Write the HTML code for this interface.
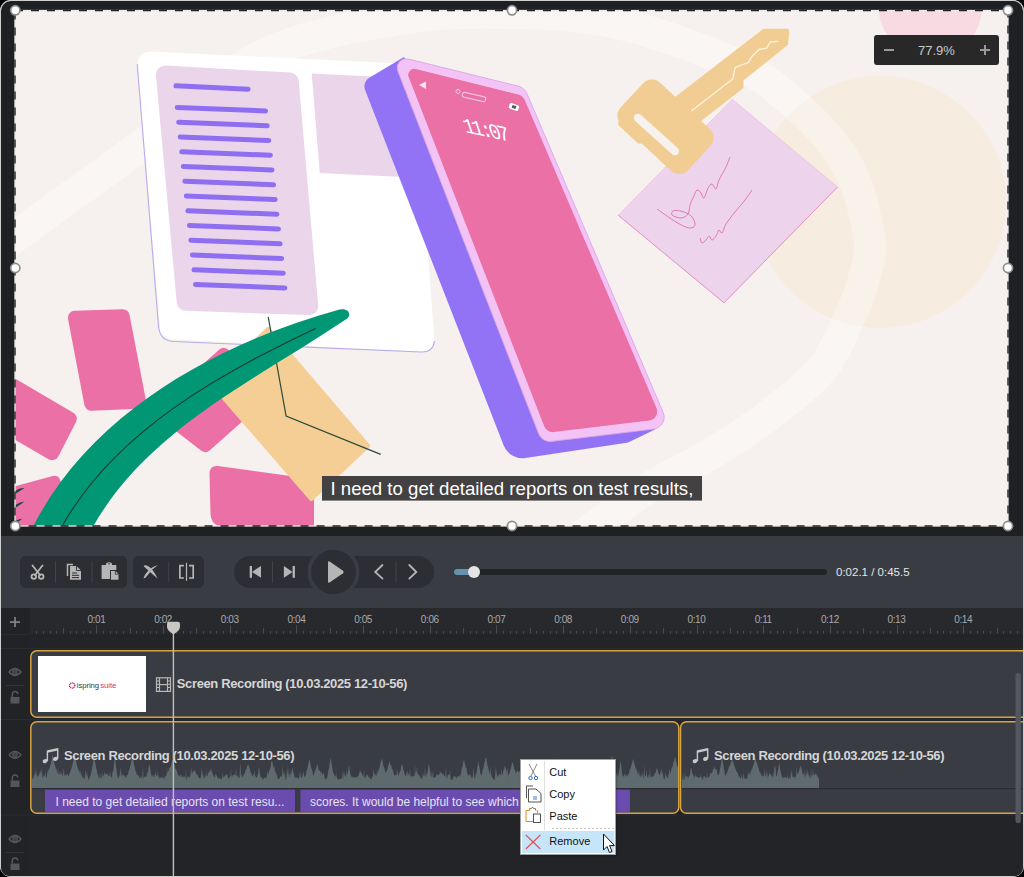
<!DOCTYPE html>
<html><head><meta charset="utf-8">
<style>
*{box-sizing:border-box;margin:0;padding:0}
html,body{width:1024px;height:877px;overflow:hidden;background:#000;font-family:"Liberation Sans",sans-serif}
.abs{position:absolute}
#win{position:absolute;left:0;top:0;width:1024px;height:877px;border-radius:11px;background:#1f2024;overflow:hidden;box-shadow:inset 0 0 0 1px #cfcfcf}
#canvas{position:absolute;left:15px;top:10px;width:993px;height:516px;background:#f6f1ee;overflow:hidden}
#ctrl{position:absolute;left:1px;top:536px;width:1022px;height:72px;background:#393c43}
.grp{position:absolute;top:20px;height:32px;background:#2c2e33;border-radius:5px}
.sep{position:absolute;top:8px;width:1px;height:16px;background:#43464c}
#ruler{position:absolute;left:30px;top:608px;width:993px;height:26px;background:#28292d}
#leftcol{position:absolute;left:1px;top:608px;width:29px;height:268px;background:#212327}
#tracks{position:absolute;left:30px;top:634px;width:993px;height:242px;background:#222428}
.clip{position:absolute;border:2px solid #d9a443;border-radius:6px;background:#393c43}
.title{position:absolute;color:#d6d6d6;font-weight:700;font-size:13px;letter-spacing:-0.37px;white-space:nowrap}
.sub{position:absolute;top:789px;height:23px;background:#6a4cae;color:#e6e0f2;font-size:12px;white-space:nowrap;overflow:hidden;line-height:23px;padding-left:10px}
.lbl{position:absolute;top:613px;font-size:10px;color:#a9abaf;letter-spacing:-0.45px;white-space:nowrap}
</style></head><body>
<div id="win">
  <div id="canvas">
    <svg width="993" height="516" viewBox="15 10 993 516" style="position:absolute;left:0;top:0">
      <!-- ILLUSTRATION -->
<rect x="15" y="10" width="993" height="516" fill="#f6f1ee"/>
<circle cx="880" cy="202" r="126" fill="#f6ecdf"/>
<path d="M-30.0 275.0 C-22.5 268.7 -13.0 258.2 15.0 237.0 C43.0 215.8 97.0 178.2 138.0 148.0 C179.0 117.8 217.3 77.5 261.0 56.0 C304.7 34.5 358.2 26.2 400.0 19.0 C441.8 11.8 476.7 12.5 512.0 13.0 C547.3 13.5 578.7 15.2 612.0 22.0 C645.3 28.8 685.3 43.5 712.0 54.0 C738.7 64.5 750.3 68.0 772.0 85.0 C793.7 102.0 825.8 130.8 842.0 156.0 C858.2 181.2 865.7 214.5 869.0 236.0 C872.3 257.5 865.8 270.2 862.0 285.0 C858.2 299.8 852.8 310.8 846.0 325.0 C839.2 339.2 834.0 354.8 821.0 370.0 C808.0 385.2 786.7 401.8 768.0 416.0 C749.3 430.2 729.5 442.7 709.0 455.0 C688.5 467.3 664.8 477.5 645.0 490.0 C625.2 502.5 607.5 516.7 590.0 530.0 C572.5 543.3 548.3 563.3 540.0 570.0" fill="none" stroke="#ffffff" stroke-opacity="0.34" stroke-width="32"/>
<circle cx="930.3" cy="6" r="52" fill="#f8dbe2"/>
<path d="M149.4 63.6 L401.9 75.5 L422.5 339.8 L171.8 327.3 Z" fill="#ffffff" stroke="#ffffff" stroke-width="24" stroke-linejoin="round" />
<path d="M 137.2 64 L 158.6 327 Q 160 341 174 341.5 L 421 352 Q 433 352.5 434.5 341" fill="none" stroke="#b9aaef" stroke-width="1.1"/>
<path d="M164.9 74.6 L289.7 81.6 L309.2 306.1 L185.7 301.8 Z" fill="#ead5eb" stroke="#ead5eb" stroke-width="18" stroke-linejoin="round" />
<path d="M311.7 73.6 L440.0 80.0 L445.0 179.0 L319.8 173.0 Z" fill="#ead5eb"/>
<g stroke="#8e6ff2" stroke-width="5" stroke-linecap="round">
<line x1="176" y1="85.8" x2="248" y2="89.3"/>
<line x1="177.2" y1="107.5" x2="265.6" y2="111.0"/>
<line x1="178.7" y1="122.2" x2="267.2" y2="125.8"/>
<line x1="180.2" y1="137.0" x2="268.8" y2="140.5"/>
<line x1="181.8" y1="151.8" x2="270.4" y2="155.2"/>
<line x1="183.3" y1="166.5" x2="272.0" y2="170.0"/>
<line x1="184.8" y1="181.2" x2="273.6" y2="184.8"/>
<line x1="186.3" y1="196.0" x2="275.2" y2="199.5"/>
<line x1="187.9" y1="210.8" x2="276.9" y2="214.2"/>
<line x1="189.4" y1="225.5" x2="278.5" y2="229.0"/>
<line x1="190.9" y1="240.2" x2="280.1" y2="243.8"/>
<line x1="192.4" y1="255.0" x2="281.7" y2="258.5"/>
<line x1="194.0" y1="269.8" x2="283.3" y2="273.2"/>
<line x1="195.5" y1="284.5" x2="284.9" y2="288.0"/>
</g>
<path d="M74.9 317.7 L122.7 316.2 L139.1 401.8 L91.3 403.8 Z" fill="#eb70a6" stroke="#eb70a6" stroke-width="14" stroke-linejoin="round" />
<path d="M-7.1 373.8 L69.8 418.7 L52.1 453.2 L-24.8 408.3 Z" fill="#eb70a6" stroke="#eb70a6" stroke-width="14" stroke-linejoin="round" />
<path d="M223.7 355.1 L268.0 389.4 L205.3 444.9 L161.0 410.6 Z" fill="#eb70a6" stroke="#eb70a6" stroke-width="14" stroke-linejoin="round" />
<path d="M218 466 Q209.5 465 209.5 474 L210.5 514 Q211 525 222 527 L314 540 L314 490 L305 478 Z" fill="#eb70a6"/>
<path d="M-4.0 497.6 L54.3 481.7 L81.3 554.0 L-4.0 554.0 Z" fill="#eb70a6" stroke="#eb70a6" stroke-width="12" stroke-linejoin="round" />
<path d="M268.0 328.9 L368.2 445.8 L311.3 499.1 L210.8 383.1 Z" fill="#f4ce94" stroke="#f4ce94" stroke-width="4" stroke-linejoin="round" />
<path d="M268.2 316.8 L286.1 416.1 L380.7 454.4" fill="none" stroke="#2c4a3b" stroke-width="1.2"/>
<path d="M29 533 L33.8 525.3 C 92 411.4, 220.5 341.9, 339.6 309.6 C 349 307.5, 353 316, 345 320 C 255.2 380.4, 148.9 428.6, 93.4 526 L 90 533 Z" fill="#019674"/>
<path d="M59 532 L62.2 526 C 115.9 430.6, 221.1 372.9, 315.6 328.4" fill="none" stroke="#173a2e" stroke-width="1.1"/>
<path d="M14 492 Q19 487.5 24.5 488 Q20 491 14 494.5 Z M14 506 Q19 502 24.5 501.5 Q20 505 14 508.5 Z M14 522 Q18 519 22.5 518.5 Q19 521.5 14 524 Z" fill="#17443c"/>
<path d="M404.27 57.38 A0.5 0.5 0 0 0 403.60 57.24 L369.28 77.67 A10 10 0 0 0 365.08 89.89 L503.69 445.50 A20 20 0 0 0 525.31 458.01 L626.80 442.68 A8 8 0 0 0 629.09 441.97 L653.93 429.97 A4 4 0 0 0 655.56 424.20 L640.00 400.01 A0.5 0.5 0 0 0 640.00 399.99 L420.00 80.00 A0.5 0.5 0 0 0 420.00 80.00 Z" fill="#9273f6"/>
<path d="M397.77 70.96 A9 9 0 0 1 408.33 58.97 L518.11 86.14 A13 13 0 0 1 526.94 93.65 L663.21 412.48 A12 12 0 0 1 653.60 429.11 L551.25 441.39 A12 12 0 0 1 538.63 433.82 Z" fill="#f4c3f6" stroke="#d9a6e8" stroke-width="0.9"/>
<path d="M408.68 77.07 A6 6 0 0 1 415.72 69.08 L518.07 94.40 A10 10 0 0 1 524.86 100.18 L656.48 408.06 A9 9 0 0 1 649.28 420.54 L553.74 432.06 A9 9 0 0 1 544.27 426.38 Z" fill="#eb70a6"/>
<text x="0" y="0" transform="translate(465.5 132.2) rotate(12) skewX(30)" font-family="Liberation Mono" font-size="20" fill="#ffffff" letter-spacing="-3.2">11:07</text>
<rect x="-12" y="-2.5" width="24" height="5" rx="2.5" transform="translate(474 97) rotate(13)" fill="none" stroke="#f8d0e2" stroke-width="1"/>
<circle cx="458" cy="91.5" r="2" fill="none" stroke="#f8d0e2" stroke-width="1"/>
<path d="M419 85 L426 81.5 L426 89 Z" fill="#fbe6ef"/>
<g transform="translate(514 107) rotate(20)"><rect x="-5" y="-3" width="10" height="6" rx="2" fill="#fff"/><rect x="-2" y="-1.5" width="4" height="3" fill="#555"/></g>
<path d="M732.3 99.4 L837.5 187 L724 302.8 L618.2 215.2 Z" fill="#edd3ec" stroke="#eec0dc" stroke-width="0.8"/>
<path d="M618.2 215.2 L724 302.8 L837.5 187" fill="none" stroke="#e496c4" stroke-width="1"/>
<path d="M657.0 209.0 C660.2 211.2 670.7 218.8 676.0 222.0 C681.3 225.2 685.8 227.5 689.0 228.0 C692.2 228.5 694.5 226.8 695.0 225.0 C695.5 223.2 693.8 219.2 692.0 217.0 C690.2 214.8 687.0 213.1 684.0 212.0 C681.0 210.9 676.0 210.0 674.0 210.5 C672.0 211.0 670.8 213.8 672.0 215.0 C673.2 216.2 678.3 218.2 681.0 218.0 C683.7 217.8 686.5 216.2 688.0 214.0 C689.5 211.8 689.2 207.7 690.0 205.0 C690.8 202.3 691.8 200.5 693.0 198.0 C694.2 195.5 695.7 190.8 697.0 190.0 C698.3 189.2 699.8 191.7 701.0 193.0 C702.2 194.3 702.8 198.8 704.0 198.0 C705.2 197.2 706.7 190.3 708.0 188.0 C709.3 185.7 710.7 183.8 712.0 184.0 C713.3 184.2 714.8 189.7 716.0 189.0 C717.2 188.3 717.3 183.7 719.0 180.0 C720.7 176.3 724.2 170.8 726.0 167.0 C727.8 163.2 729.3 158.7 730.0 157.0" fill="none" stroke="#e07ab3" stroke-width="1" stroke-linejoin="round"/>
<path d="M700.0 238.0 C700.3 238.8 701.0 242.7 702.0 243.0 C703.0 243.3 704.8 241.2 706.0 240.0 C707.2 238.8 708.0 236.0 709.0 236.0 C710.0 236.0 710.8 240.0 712.0 240.0 C713.2 240.0 714.8 237.7 716.0 236.0 C717.2 234.3 718.0 230.5 719.0 230.0 C720.0 229.5 720.8 234.0 722.0 233.0 C723.2 232.0 723.8 227.5 726.0 224.0 C728.2 220.5 731.8 216.0 735.0 212.0 C738.2 208.0 742.2 203.7 745.0 200.0 C747.8 196.3 750.8 191.7 752.0 190.0" fill="none" stroke="#e07ab3" stroke-width="1" stroke-linejoin="round"/>
<path d="M662 108 L680 94 L764 29.4 L787.8 29.4 L788.5 32.5 L787.2 44.5 L742.7 80.2 L742.7 87.7 L700.7 120.3 L688 132 Z" fill="#f2cd93" stroke="#f2cd93" stroke-width="1.5" stroke-linejoin="round"/>
<g transform="translate(665.5 126.7) rotate(43)"><rect x="-46" y="-28.5" width="92" height="57" rx="12" fill="#f2cd93"/><rect x="-38" y="20" width="32" height="11" rx="4" fill="#f2cd93"/></g>
<g transform="translate(656.4 134.5) rotate(42)"><rect x="-29" y="-4.2" width="58" height="8.4" rx="4.2" fill="#f8f2ee"/></g>
<path d="M691.3 111 L732.7 79 L735.2 67.6 L742.7 64.5 L748.3 62.6 L752 56.4 L759 49.5 L766.5 48.2 L770.3 42 L778.4 41.3" fill="none" stroke="#fdf2df" stroke-width="1.3" stroke-linejoin="round"/>
<rect x="322" y="476" width="380" height="24.6" fill="#434141"/>
<text x="330.5" y="495.4" font-family="Liberation Sans" font-size="18.6" fill="#ffffff">I need to get detailed reports on test results,</text>
    </svg>
  </div>
  <!-- canvas dashed border + handles -->
  <svg class="abs" style="left:0;top:0" width="1024" height="540">
    <rect x="15" y="10.5" width="993" height="515.5" fill="none" stroke="#efeae7" stroke-width="1.3"/><rect x="15" y="10.5" width="993" height="515.5" fill="none" stroke="#202124" stroke-width="1.4" stroke-dasharray="8 8"/>
    <g fill="#fff" stroke="#8d8d8d" stroke-width="1.7">
      <circle cx="15.3" cy="10.3" r="4.6"/><circle cx="512" cy="10.3" r="4.6"/><circle cx="1008" cy="10.3" r="4.6"/>
      <circle cx="15.3" cy="268" r="4.6"/><circle cx="1008" cy="268" r="4.6"/>
      <circle cx="15.3" cy="526" r="4.6"/><circle cx="512" cy="526" r="4.6"/><circle cx="1008" cy="526" r="4.6"/>
    </g>
  </svg>
  <!-- zoom box -->
  <div class="abs" style="left:874px;top:35px;width:125px;height:30px;background:#282828;border-radius:3px"></div>
  <div class="abs" style="left:884px;top:49px;width:10px;height:1.5px;background:#9a9a9a"></div>
  <div class="abs" style="left:980px;top:49px;width:10px;height:1.5px;background:#9a9a9a"></div>
  <div class="abs" style="left:984.3px;top:44.5px;width:1.5px;height:10px;background:#9a9a9a"></div>
  <div class="abs" style="left:918px;top:43px;font-size:13px;color:#c9c9c9;line-height:16px">77.9%</div>

  <div id="ctrl"></div>
<svg class="abs" style="left:0;top:0" width="1024" height="877">
<rect x="1" y="536" width="1022" height="72" fill="#393c43"/>
<rect x="20" y="556" width="107" height="32" rx="5" fill="#2c2e33"/>
<rect x="133" y="556" width="71" height="32" rx="5" fill="#2c2e33"/>
<rect x="234" y="556" width="200" height="32" rx="16" fill="#2c2e33"/>
<g fill="#40434a">
<rect x="55" y="561.5" width="1" height="21"/>
<rect x="91.5" y="561.5" width="1" height="21"/>
<rect x="168.2" y="561.5" width="1" height="21"/>
<rect x="272" y="561.5" width="1" height="21"/>
<rect x="395.5" y="561.5" width="1" height="21"/>
</g>
<circle cx="333.5" cy="572" r="26" fill="#393c43"/>
<circle cx="333.5" cy="572" r="22.3" fill="#2c2e33"/>
<path d="M328 562.5 L328 581.5 Q328 583.5 330 582.3 L343 573.3 Q344.5 572 343 570.7 L330 561.7 Q328 560.5 328 562.5 Z" fill="#b5b5b5"/>
<g fill="none" stroke="#b5b5b5" stroke-width="1.8" stroke-linecap="round"><path d="M32.5 565.5 L40 575"/><path d="M42.5 565.5 L35 575"/><circle cx="33.8" cy="576.6" r="2.3"/><circle cx="41.2" cy="576.6" r="2.3"/></g>
<path d="M67.5 576 L67.5 564.5 L73 564.5" fill="none" stroke="#b5b5b5" stroke-width="1.5"/>
<path d="M70 566 L76.5 566 L81 570.5 L81 579.7 L70 579.7 Z" fill="#b5b5b5"/>
<path d="M76.5 566 L76.5 570.5 L81 570.5" fill="none" stroke="#2c2e33" stroke-width="0.9"/>
<g stroke="#2c2e33" stroke-width="1"><line x1="72" y1="573" x2="77" y2="573"/><line x1="72" y1="575.3" x2="79" y2="575.3"/><line x1="72" y1="577.6" x2="79" y2="577.6"/></g>
<path d="M101.6 565 L106 565 L106 563.5 Q109 561 112 563.5 L112 565 L116.3 565 L116.3 570 L110 570 L110 579 L101.6 579 Z" fill="#b5b5b5"/>
<circle cx="109" cy="563.8" r="0.8" fill="#2c2e33"/>
<path d="M111 571 L115.5 571 L118.5 574 L118.5 579.7 L111 579.7 Z" fill="#b5b5b5"/>
<path d="M115.3 571 L115.3 574.2 L118.5 574.2" fill="none" stroke="#2c2e33" stroke-width="0.8"/>
<path d="M143.6 565.8 Q146 564 150 567.5 Q154 571 157.6 578.5 Q152 574 148.5 570.5 Q144.5 567.5 143.6 565.8 Z" fill="#b5b5b5"/>
<path d="M157.6 565.2 Q151 567 147.5 571.5 Q144 575.5 143.6 578.2 Q145 579 147 576 Q151 569.5 157.6 565.2 Z" fill="#b5b5b5"/>
<g fill="none" stroke="#b5b5b5" stroke-width="1.7"><path d="M183.9 565.6 L179.9 565.6 L179.9 578 L183.9 578"/><path d="M189 565.6 L193.2 565.6 L193.2 578 L189 578"/></g><rect x="185.9" y="562.8" width="1.2" height="18" fill="#b5b5b5"/>
<rect x="249.7" y="566" width="2.3" height="11.8" fill="#b5b5b5"/><path d="M252 571.9 L261 566 L261 577.8 Z" fill="#b5b5b5"/>
<rect x="292.6" y="566" width="2.3" height="11.8" fill="#b5b5b5"/><path d="M292.6 571.9 L283.9 566 L283.9 577.8 Z" fill="#b5b5b5"/>
<g fill="none" stroke="#b5b5b5" stroke-width="1.8" stroke-linecap="round"><path d="M382.5 565 L375.2 572 L382.5 578.6"/><path d="M409.3 565 L416.3 572 L409.3 578.6"/></g>
<rect x="454" y="569" width="373" height="6" rx="3" fill="#222327"/>
<rect x="454" y="569" width="22" height="6" rx="3" fill="#6792ad"/>
<circle cx="474" cy="572" r="6" fill="#e5e5e5"/>
<text x="836" y="576" font-family="Liberation Sans" font-size="11.5" fill="#e6e6e6">0:02.1 / 0:45.5</text>
<rect x="1" y="608" width="29" height="269" fill="#212327"/>
<rect x="30" y="608" width="994" height="26.5" fill="#28292d"/>
<rect x="30" y="634.5" width="994" height="243" fill="#222428"/>
<g fill="#2a2c30"><rect x="1" y="634" width="29" height="1"/><rect x="1" y="648" width="1023" height="1"/><rect x="1" y="719" width="1023" height="1"/><rect x="1" y="814.5" width="1023" height="1"/></g>
<g fill="#34363b"><rect x="6" y="685" width="18" height="1"/><rect x="6" y="852" width="18" height="1"/></g>
<g fill="#8a8b8e"><rect x="10" y="621.3" width="10" height="1.6"/><rect x="14.2" y="617" width="1.6" height="10"/></g>
<g fill="#4a4c51">
<rect x="36" y="631" width="1" height="2.6"/>
<rect x="43" y="631" width="1" height="2.6"/>
<rect x="50" y="631" width="1" height="2.6"/>
<rect x="56" y="631" width="1" height="2.6"/>
<rect x="63" y="628.2" width="1" height="5.4"/>
<rect x="70" y="631" width="1" height="2.6"/>
<rect x="76" y="631" width="1" height="2.6"/>
<rect x="83" y="631" width="1" height="2.6"/>
<rect x="90" y="631" width="1" height="2.6"/>
<rect x="96" y="625.3" width="1" height="8.3"/>
<rect x="103" y="631" width="1" height="2.6"/>
<rect x="110" y="631" width="1" height="2.6"/>
<rect x="116" y="631" width="1" height="2.6"/>
<rect x="123" y="631" width="1" height="2.6"/>
<rect x="130" y="628.2" width="1" height="5.4"/>
<rect x="136" y="631" width="1" height="2.6"/>
<rect x="143" y="631" width="1" height="2.6"/>
<rect x="150" y="631" width="1" height="2.6"/>
<rect x="156" y="631" width="1" height="2.6"/>
<rect x="163" y="625.3" width="1" height="8.3"/>
<rect x="170" y="631" width="1" height="2.6"/>
<rect x="176" y="631" width="1" height="2.6"/>
<rect x="183" y="631" width="1" height="2.6"/>
<rect x="190" y="631" width="1" height="2.6"/>
<rect x="196" y="628.2" width="1" height="5.4"/>
<rect x="203" y="631" width="1" height="2.6"/>
<rect x="210" y="631" width="1" height="2.6"/>
<rect x="216" y="631" width="1" height="2.6"/>
<rect x="223" y="631" width="1" height="2.6"/>
<rect x="230" y="625.3" width="1" height="8.3"/>
<rect x="236" y="631" width="1" height="2.6"/>
<rect x="243" y="631" width="1" height="2.6"/>
<rect x="250" y="631" width="1" height="2.6"/>
<rect x="256" y="631" width="1" height="2.6"/>
<rect x="263" y="628.2" width="1" height="5.4"/>
<rect x="270" y="631" width="1" height="2.6"/>
<rect x="276" y="631" width="1" height="2.6"/>
<rect x="283" y="631" width="1" height="2.6"/>
<rect x="290" y="631" width="1" height="2.6"/>
<rect x="296" y="625.3" width="1" height="8.3"/>
<rect x="303" y="631" width="1" height="2.6"/>
<rect x="310" y="631" width="1" height="2.6"/>
<rect x="316" y="631" width="1" height="2.6"/>
<rect x="323" y="631" width="1" height="2.6"/>
<rect x="330" y="628.2" width="1" height="5.4"/>
<rect x="336" y="631" width="1" height="2.6"/>
<rect x="343" y="631" width="1" height="2.6"/>
<rect x="350" y="631" width="1" height="2.6"/>
<rect x="356" y="631" width="1" height="2.6"/>
<rect x="363" y="625.3" width="1" height="8.3"/>
<rect x="370" y="631" width="1" height="2.6"/>
<rect x="376" y="631" width="1" height="2.6"/>
<rect x="383" y="631" width="1" height="2.6"/>
<rect x="390" y="631" width="1" height="2.6"/>
<rect x="396" y="628.2" width="1" height="5.4"/>
<rect x="403" y="631" width="1" height="2.6"/>
<rect x="410" y="631" width="1" height="2.6"/>
<rect x="416" y="631" width="1" height="2.6"/>
<rect x="423" y="631" width="1" height="2.6"/>
<rect x="430" y="625.3" width="1" height="8.3"/>
<rect x="436" y="631" width="1" height="2.6"/>
<rect x="443" y="631" width="1" height="2.6"/>
<rect x="450" y="631" width="1" height="2.6"/>
<rect x="456" y="631" width="1" height="2.6"/>
<rect x="463" y="628.2" width="1" height="5.4"/>
<rect x="470" y="631" width="1" height="2.6"/>
<rect x="476" y="631" width="1" height="2.6"/>
<rect x="483" y="631" width="1" height="2.6"/>
<rect x="490" y="631" width="1" height="2.6"/>
<rect x="496" y="625.3" width="1" height="8.3"/>
<rect x="503" y="631" width="1" height="2.6"/>
<rect x="510" y="631" width="1" height="2.6"/>
<rect x="516" y="631" width="1" height="2.6"/>
<rect x="523" y="631" width="1" height="2.6"/>
<rect x="530" y="628.2" width="1" height="5.4"/>
<rect x="536" y="631" width="1" height="2.6"/>
<rect x="543" y="631" width="1" height="2.6"/>
<rect x="550" y="631" width="1" height="2.6"/>
<rect x="556" y="631" width="1" height="2.6"/>
<rect x="563" y="625.3" width="1" height="8.3"/>
<rect x="570" y="631" width="1" height="2.6"/>
<rect x="576" y="631" width="1" height="2.6"/>
<rect x="583" y="631" width="1" height="2.6"/>
<rect x="590" y="631" width="1" height="2.6"/>
<rect x="596" y="628.2" width="1" height="5.4"/>
<rect x="603" y="631" width="1" height="2.6"/>
<rect x="610" y="631" width="1" height="2.6"/>
<rect x="616" y="631" width="1" height="2.6"/>
<rect x="623" y="631" width="1" height="2.6"/>
<rect x="630" y="625.3" width="1" height="8.3"/>
<rect x="636" y="631" width="1" height="2.6"/>
<rect x="643" y="631" width="1" height="2.6"/>
<rect x="650" y="631" width="1" height="2.6"/>
<rect x="656" y="631" width="1" height="2.6"/>
<rect x="663" y="628.2" width="1" height="5.4"/>
<rect x="670" y="631" width="1" height="2.6"/>
<rect x="676" y="631" width="1" height="2.6"/>
<rect x="683" y="631" width="1" height="2.6"/>
<rect x="690" y="631" width="1" height="2.6"/>
<rect x="697" y="625.3" width="1" height="8.3"/>
<rect x="703" y="631" width="1" height="2.6"/>
<rect x="710" y="631" width="1" height="2.6"/>
<rect x="717" y="631" width="1" height="2.6"/>
<rect x="723" y="631" width="1" height="2.6"/>
<rect x="730" y="628.2" width="1" height="5.4"/>
<rect x="737" y="631" width="1" height="2.6"/>
<rect x="743" y="631" width="1" height="2.6"/>
<rect x="750" y="631" width="1" height="2.6"/>
<rect x="757" y="631" width="1" height="2.6"/>
<rect x="763" y="625.3" width="1" height="8.3"/>
<rect x="770" y="631" width="1" height="2.6"/>
<rect x="777" y="631" width="1" height="2.6"/>
<rect x="783" y="631" width="1" height="2.6"/>
<rect x="790" y="631" width="1" height="2.6"/>
<rect x="797" y="628.2" width="1" height="5.4"/>
<rect x="803" y="631" width="1" height="2.6"/>
<rect x="810" y="631" width="1" height="2.6"/>
<rect x="817" y="631" width="1" height="2.6"/>
<rect x="823" y="631" width="1" height="2.6"/>
<rect x="830" y="625.3" width="1" height="8.3"/>
<rect x="837" y="631" width="1" height="2.6"/>
<rect x="843" y="631" width="1" height="2.6"/>
<rect x="850" y="631" width="1" height="2.6"/>
<rect x="857" y="631" width="1" height="2.6"/>
<rect x="863" y="628.2" width="1" height="5.4"/>
<rect x="870" y="631" width="1" height="2.6"/>
<rect x="877" y="631" width="1" height="2.6"/>
<rect x="883" y="631" width="1" height="2.6"/>
<rect x="890" y="631" width="1" height="2.6"/>
<rect x="897" y="625.3" width="1" height="8.3"/>
<rect x="903" y="631" width="1" height="2.6"/>
<rect x="910" y="631" width="1" height="2.6"/>
<rect x="917" y="631" width="1" height="2.6"/>
<rect x="923" y="631" width="1" height="2.6"/>
<rect x="930" y="628.2" width="1" height="5.4"/>
<rect x="937" y="631" width="1" height="2.6"/>
<rect x="943" y="631" width="1" height="2.6"/>
<rect x="950" y="631" width="1" height="2.6"/>
<rect x="957" y="631" width="1" height="2.6"/>
<rect x="963" y="625.3" width="1" height="8.3"/>
<rect x="970" y="631" width="1" height="2.6"/>
<rect x="977" y="631" width="1" height="2.6"/>
<rect x="983" y="631" width="1" height="2.6"/>
<rect x="990" y="631" width="1" height="2.6"/>
<rect x="997" y="628.2" width="1" height="5.4"/>
<rect x="1003" y="631" width="1" height="2.6"/>
<rect x="1010" y="631" width="1" height="2.6"/>
<rect x="1017" y="631" width="1" height="2.6"/>
<rect x="1023" y="631" width="1" height="2.6"/>
</g>
<g font-family="Liberation Sans" font-size="10" fill="#a8a9ac" text-anchor="middle" letter-spacing="-0.4">
<text x="96.4" y="623">0:01</text>
<text x="163.1" y="623">0:02</text>
<text x="229.7" y="623">0:03</text>
<text x="296.4" y="623">0:04</text>
<text x="363.1" y="623">0:05</text>
<text x="429.8" y="623">0:06</text>
<text x="496.5" y="623">0:07</text>
<text x="563.1" y="623">0:08</text>
<text x="629.8" y="623">0:09</text>
<text x="696.5" y="623">0:10</text>
<text x="763.2" y="623">0:11</text>
<text x="829.9" y="623">0:12</text>
<text x="896.5" y="623">0:13</text>
<text x="963.2" y="623">0:14</text>
</g>
<g fill="none" stroke="#56585c" stroke-width="1.3"><path d="M9 672 Q15 665 21 672 Q15 679 9 672 Z"/><circle cx="15" cy="672" r="2.2"/></g><circle cx="15" cy="672" r="0.9" fill="#56585c"/>
<g><rect x="10.5" y="697.0" width="9" height="6.5" fill="#54565b"/><path d="M12.3 697.0 L12.3 694.5 Q12.3 691.5 15 691.5 Q17.7 691.5 17.7 694.0" fill="none" stroke="#54565b" stroke-width="1.5"/></g>
<g fill="none" stroke="#56585c" stroke-width="1.3"><path d="M9 754.8 Q15 747.8 21 754.8 Q15 761.8 9 754.8 Z"/><circle cx="15" cy="754.8" r="2.2"/></g><circle cx="15" cy="754.8" r="0.9" fill="#56585c"/>
<g><rect x="10.5" y="780.5" width="9" height="6.5" fill="#54565b"/><path d="M12.3 780.5 L12.3 778 Q12.3 775 15 775 Q17.7 775 17.7 777.5" fill="none" stroke="#54565b" stroke-width="1.5"/></g>
<g fill="none" stroke="#56585c" stroke-width="1.3"><path d="M9 839 Q15 832 21 839 Q15 846 9 839 Z"/><circle cx="15" cy="839" r="2.2"/></g><circle cx="15" cy="839" r="0.9" fill="#56585c"/>
<g><rect x="10.5" y="863.5" width="9" height="6.5" fill="#54565b"/><path d="M12.3 863.5 L12.3 861 Q12.3 858 15 858 Q17.7 858 17.7 860.5" fill="none" stroke="#54565b" stroke-width="1.5"/></g>
<rect x="30.8" y="650.8" width="1010" height="66.4" rx="6" fill="#393c43" stroke="#d9a443" stroke-width="1.5"/>
<rect x="38" y="656" width="108" height="56" fill="#ffffff"/>
<g transform="translate(72.2 685.5)"><circle cx="0" cy="0" r="2.6" fill="none" stroke="#c2185b" stroke-width="1.4" stroke-dasharray="1 0.65"/><circle cx="0" cy="0" r="1.2" fill="#fff"/></g>
<text x="76.8" y="688.3" font-family="Liberation Sans" font-size="7.8" fill="#3a3a3a" letter-spacing="-0.1">ispring</text>
<text x="100.3" y="688.3" font-family="Liberation Sans" font-size="7.8" fill="#c2407a" letter-spacing="-0.1">suite</text>
<g fill="none" stroke="#b9b9b9" stroke-width="1.2"><rect x="156.5" y="677.8" width="14" height="13.6"/><line x1="159.5" y1="677.8" x2="159.5" y2="691.4"/><line x1="167.5" y1="677.8" x2="167.5" y2="691.4"/><line x1="159.5" y1="684.6" x2="167.5" y2="684.6"/></g>
<g fill="#b9b9b9"><rect x="156.5" y="680.5" width="3" height="1"/><rect x="156.5" y="683.8" width="3" height="1"/><rect x="156.5" y="687" width="3" height="1"/><rect x="167.5" y="680.5" width="3" height="1"/><rect x="167.5" y="683.8" width="3" height="1"/><rect x="167.5" y="687" width="3" height="1"/></g>
<text x="176.8" y="688.2" font-family="Liberation Sans" font-size="13" font-weight="700" fill="#d6d6d6" letter-spacing="-0.37">Screen Recording (10.03.2025 12-10-56)</text>
<rect x="30.8" y="721.8" width="648" height="91.4" rx="6" fill="#393c43" stroke="#d9a443" stroke-width="1.5"/>
<rect x="680.5" y="721.8" width="400" height="91.4" rx="6" fill="#393c43" stroke="#d9a443" stroke-width="1.5"/>
<path d="M32 788 L32.0 778.7 L32.5 778.1 L33.0 779.3 L33.5 776.7 L34.0 773.6 L34.5 777.4 L35.0 769.4 L35.5 774.8 L36.0 768.7 L36.5 774.8 L37.0 775.7 L37.5 777.5 L38.0 775.8 L38.5 775.3 L39.0 776.0 L39.5 771.8 L40.0 773.1 L40.5 769.3 L41.0 774.3 L41.5 771.8 L42.0 766.1 L42.5 778.6 L43.0 776.4 L43.5 775.3 L44.0 777.5 L44.5 774.6 L45.0 776.3 L45.5 769.6 L46.0 778.2 L46.5 777.2 L47.0 775.7 L47.5 769.9 L48.0 772.8 L48.5 768.9 L49.0 770.1 L49.5 768.3 L50.0 766.5 L50.5 764.8 L51.0 762.3 L51.5 760.8 L52.0 757.6 L52.5 754.6 L53.0 755.3 L53.5 758.5 L54.0 762.3 L54.5 763.2 L55.0 765.3 L55.5 766.4 L56.0 769.4 L56.5 768.5 L57.0 772.2 L57.5 773.6 L58.0 766.9 L58.5 774.9 L59.0 774.6 L59.5 773.8 L60.0 770.0 L60.5 773.5 L61.0 775.3 L61.5 773.8 L62.0 771.3 L62.5 776.7 L63.0 775.1 L63.5 770.0 L64.0 767.6 L64.5 777.6 L65.0 773.6 L65.5 776.1 L66.0 774.2 L66.5 775.5 L67.0 774.4 L67.5 773.1 L68.0 775.9 L68.5 775.9 L69.0 774.9 L69.5 773.9 L70.0 772.4 L70.5 770.9 L71.0 770.1 L71.5 767.3 L72.0 767.5 L72.5 764.3 L73.0 762.4 L73.5 761.1 L74.0 757.3 L74.5 755.3 L75.0 756.7 L75.5 758.9 L76.0 760.6 L76.5 763.3 L77.0 765.1 L77.5 767.2 L78.0 769.3 L78.5 770.7 L79.0 767.9 L79.5 773.1 L80.0 771.9 L80.5 770.9 L81.0 775.8 L81.5 772.9 L82.0 778.3 L82.5 777.4 L83.0 775.2 L83.5 777.4 L84.0 779.3 L84.5 778.2 L85.0 777.9 L85.5 769.6 L86.0 772.8 L86.5 775.7 L87.0 771.3 L87.5 776.4 L88.0 776.7 L88.5 779.7 L89.0 779.5 L89.5 778.0 L90.0 775.9 L90.5 775.6 L91.0 774.0 L91.5 771.1 L92.0 768.1 L92.5 766.3 L93.0 763.3 L93.5 760.1 L94.0 756.1 L94.5 757.6 L95.0 761.9 L95.5 763.8 L96.0 767.4 L96.5 769.3 L97.0 771.1 L97.5 774.5 L98.0 774.6 L98.5 777.8 L99.0 778.3 L99.5 776.5 L100.0 771.3 L100.5 779.2 L101.0 778.0 L101.5 778.0 L102.0 769.3 L102.5 775.4 L103.0 776.8 L103.5 775.6 L104.0 775.0 L104.5 771.2 L105.0 773.6 L105.5 774.4 L106.0 774.2 L106.5 774.0 L107.0 772.8 L107.5 773.4 L108.0 775.6 L108.5 776.2 L109.0 776.6 L109.5 775.2 L110.0 770.2 L110.5 775.6 L111.0 776.5 L111.5 777.5 L112.0 777.3 L112.5 772.2 L113.0 771.5 L113.5 769.9 L114.0 764.2 L114.5 759.1 L115.0 755.2 L115.5 761.0 L116.0 767.1 L116.5 769.0 L117.0 774.4 L117.5 776.3 L118.0 778.3 L118.5 778.3 L119.0 776.1 L119.5 776.6 L120.0 771.2 L120.5 766.8 L121.0 775.4 L121.5 775.7 L122.0 769.6 L122.5 776.5 L123.0 775.8 L123.5 774.0 L124.0 775.4 L124.5 775.4 L125.0 776.2 L125.5 777.3 L126.0 777.9 L126.5 775.5 L127.0 774.6 L127.5 775.5 L128.0 773.9 L128.5 771.2 L129.0 770.3 L129.5 769.0 L130.0 766.5 L130.5 764.8 L131.0 762.2 L131.5 759.3 L132.0 756.9 L132.5 756.0 L133.0 758.5 L133.5 760.9 L134.0 764.1 L134.5 766.3 L135.0 768.1 L135.5 771.3 L136.0 771.8 L136.5 773.0 L137.0 775.5 L137.5 774.4 L138.0 775.0 L138.5 775.9 L139.0 775.8 L139.5 778.0 L140.0 779.1 L140.5 775.8 L141.0 777.9 L141.5 776.0 L142.0 779.2 L142.5 775.5 L143.0 764.4 L143.5 779.1 L144.0 777.4 L144.5 777.1 L145.0 776.3 L145.5 776.7 L146.0 776.1 L146.5 777.8 L147.0 770.8 L147.5 774.2 L148.0 771.2 L148.5 767.7 L149.0 764.8 L149.5 764.7 L150.0 767.4 L150.5 770.3 L151.0 773.8 L151.5 775.1 L152.0 777.5 L152.5 774.3 L153.0 776.7 L153.5 777.1 L154.0 775.2 L154.5 774.2 L155.0 777.2 L155.5 769.6 L156.0 775.1 L156.5 775.1 L157.0 777.1 L157.5 770.1 L158.0 777.7 L158.5 776.6 L159.0 774.2 L159.5 779.0 L160.0 778.8 L160.5 777.0 L161.0 777.7 L161.5 777.7 L162.0 777.2 L162.5 778.0 L163.0 774.2 L163.5 779.2 L164.0 778.4 L164.5 778.5 L165.0 774.8 L165.5 777.3 L166.0 775.3 L166.5 776.0 L167.0 766.5 L167.5 773.1 L168.0 771.9 L168.5 771.3 L169.0 768.8 L169.5 767.6 L170.0 767.3 L170.5 766.9 L171.0 765.3 L171.5 762.8 L172.0 760.4 L172.5 760.0 L173.0 760.3 L173.5 761.7 L174.0 763.9 L174.5 764.4 L175.0 766.0 L175.5 768.9 L176.0 769.1 L176.5 769.9 L177.0 772.0 L177.5 772.4 L178.0 775.4 L178.5 775.2 L179.0 776.5 L179.5 776.8 L180.0 774.8 L180.5 775.7 L181.0 773.6 L181.5 776.9 L182.0 777.4 L182.5 776.5 L183.0 774.9 L183.5 777.9 L184.0 776.0 L184.5 776.5 L185.0 778.8 L185.5 777.1 L186.0 768.3 L186.5 779.2 L187.0 779.9 L187.5 776.0 L188.0 776.7 L188.5 776.4 L189.0 777.5 L189.5 777.1 L190.0 776.7 L190.5 774.3 L191.0 767.6 L191.5 770.0 L192.0 774.3 L192.5 771.8 L193.0 772.3 L193.5 771.3 L194.0 770.0 L194.5 770.9 L195.0 770.5 L195.5 771.9 L196.0 773.0 L196.5 774.7 L197.0 774.9 L197.5 774.0 L198.0 776.6 L198.5 777.0 L199.0 777.8 L199.5 778.3 L200.0 778.5 L200.5 778.2 L201.0 775.5 L201.5 766.3 L202.0 776.2 L202.5 770.2 L203.0 773.6 L203.5 779.5 L204.0 774.7 L204.5 777.6 L205.0 777.9 L205.5 776.5 L206.0 769.5 L206.5 775.2 L207.0 775.9 L207.5 776.2 L208.0 773.1 L208.5 772.9 L209.0 772.1 L209.5 771.7 L210.0 769.6 L210.5 771.0 L211.0 767.6 L211.5 771.3 L212.0 772.2 L212.5 773.1 L213.0 775.0 L213.5 775.2 L214.0 776.5 L214.5 777.2 L215.0 777.9 L215.5 772.9 L216.0 774.6 L216.5 775.5 L217.0 775.9 L217.5 777.5 L218.0 778.5 L218.5 778.5 L219.0 777.0 L219.5 778.9 L220.0 778.9 L220.5 777.6 L221.0 779.7 L221.5 779.0 L222.0 779.1 L222.5 771.5 L223.0 778.3 L223.5 776.8 L224.0 776.3 L224.5 776.7 L225.0 776.3 L225.5 774.7 L226.0 773.9 L226.5 775.3 L227.0 774.7 L227.5 773.9 L228.0 778.6 L228.5 778.4 L229.0 777.7 L229.5 778.3 L230.0 776.1 L230.5 776.0 L231.0 767.9 L231.5 776.1 L232.0 777.1 L232.5 776.3 L233.0 774.5 L233.5 775.3 L234.0 775.1 L234.5 774.4 L235.0 775.3 L235.5 775.5 L236.0 767.1 L236.5 775.8 L237.0 776.9 L237.5 775.6 L238.0 775.0 L238.5 777.8 L239.0 778.0 L239.5 778.6 L240.0 765.5 L240.5 764.0 L241.0 776.9 L241.5 773.2 L242.0 777.0 L242.5 777.2 L243.0 776.0 L243.5 774.9 L244.0 774.1 L244.5 773.8 L245.0 772.4 L245.5 769.9 L246.0 769.7 L246.5 769.0 L247.0 766.4 L247.5 765.8 L248.0 764.3 L248.5 765.3 L249.0 765.8 L249.5 768.4 L250.0 769.2 L250.5 772.2 L251.0 773.1 L251.5 773.6 L252.0 775.0 L252.5 776.2 L253.0 775.9 L253.5 774.3 L254.0 773.8 L254.5 769.4 L255.0 775.4 L255.5 776.4 L256.0 776.9 L256.5 777.9 L257.0 776.9 L257.5 775.1 L258.0 775.1 L258.5 766.2 L259.0 774.8 L259.5 766.1 L260.0 773.5 L260.5 776.8 L261.0 777.8 L261.5 777.1 L262.0 777.2 L262.5 779.4 L263.0 779.6 L263.5 778.5 L264.0 778.6 L264.5 777.7 L265.0 777.2 L265.5 777.6 L266.0 777.9 L266.5 778.4 L267.0 771.7 L267.5 771.3 L268.0 775.8 L268.5 773.2 L269.0 771.5 L269.5 769.7 L270.0 768.8 L270.5 767.8 L271.0 763.6 L271.5 761.3 L272.0 761.1 L272.5 762.2 L273.0 765.0 L273.5 767.6 L274.0 768.5 L274.5 764.9 L275.0 772.3 L275.5 771.4 L276.0 772.7 L276.5 775.8 L277.0 772.9 L277.5 777.4 L278.0 779.4 L278.5 779.0 L279.0 778.7 L279.5 778.1 L280.0 776.7 L280.5 776.9 L281.0 775.2 L281.5 777.3 L282.0 775.6 L282.5 763.9 L283.0 776.1 L283.5 769.1 L284.0 777.3 L284.5 773.6 L285.0 770.9 L285.5 780.1 L286.0 779.1 L286.5 776.9 L287.0 767.4 L287.5 775.0 L288.0 765.3 L288.5 775.1 L289.0 773.2 L289.5 778.4 L290.0 769.7 L290.5 775.5 L291.0 773.8 L291.5 772.6 L292.0 769.0 L292.5 767.7 L293.0 771.3 L293.5 771.9 L294.0 775.0 L294.5 776.3 L295.0 778.4 L295.5 777.6 L296.0 776.5 L296.5 778.1 L297.0 778.4 L297.5 776.8 L298.0 778.4 L298.5 777.7 L299.0 779.2 L299.5 771.8 L300.0 778.6 L300.5 769.4 L301.0 778.0 L301.5 777.4 L302.0 776.7 L302.5 775.4 L303.0 771.4 L303.5 772.3 L304.0 775.9 L304.5 777.2 L305.0 776.3 L305.5 775.5 L306.0 774.0 L306.5 771.1 L307.0 769.5 L307.5 768.2 L308.0 765.2 L308.5 763.5 L309.0 760.9 L309.5 759.0 L310.0 760.7 L310.5 764.1 L311.0 766.7 L311.5 768.2 L312.0 769.8 L312.5 771.4 L313.0 774.6 L313.5 775.7 L314.0 774.3 L314.5 772.1 L315.0 772.1 L315.5 769.9 L316.0 768.1 L316.5 767.3 L317.0 764.8 L317.5 764.0 L318.0 766.6 L318.5 768.9 L319.0 770.3 L319.5 770.9 L320.0 771.1 L320.5 771.6 L321.0 774.7 L321.5 771.3 L322.0 771.9 L322.5 776.3 L323.0 773.1 L323.5 774.3 L324.0 772.6 L324.5 776.8 L325.0 779.6 L325.5 778.6 L326.0 779.8 L326.5 777.8 L327.0 778.3 L327.5 775.9 L328.0 772.9 L328.5 769.4 L329.0 768.6 L329.5 764.0 L330.0 761.5 L330.5 757.7 L331.0 759.7 L331.5 763.0 L332.0 766.0 L332.5 769.5 L333.0 772.2 L333.5 773.6 L334.0 773.2 L334.5 776.0 L335.0 776.1 L335.5 774.9 L336.0 778.3 L336.5 771.9 L337.0 778.5 L337.5 778.3 L338.0 778.9 L338.5 780.1 L339.0 779.8 L339.5 779.0 L340.0 777.6 L340.5 779.5 L341.0 779.0 L341.5 778.0 L342.0 779.3 L342.5 769.7 L343.0 779.7 L343.5 774.2 L344.0 770.2 L344.5 774.6 L345.0 775.8 L345.5 775.1 L346.0 778.2 L346.5 767.5 L347.0 775.1 L347.5 773.2 L348.0 771.4 L348.5 767.5 L349.0 765.6 L349.5 769.5 L350.0 771.4 L350.5 774.0 L351.0 776.1 L351.5 777.4 L352.0 775.5 L352.5 777.2 L353.0 778.2 L353.5 777.7 L354.0 776.9 L354.5 776.9 L355.0 777.4 L355.5 776.9 L356.0 777.7 L356.5 777.3 L357.0 776.4 L357.5 777.4 L358.0 776.3 L358.5 775.6 L359.0 774.1 L359.5 772.2 L360.0 771.4 L360.5 770.4 L361.0 773.6 L361.5 772.4 L362.0 773.6 L362.5 775.5 L363.0 776.5 L363.5 776.4 L364.0 770.2 L364.5 777.3 L365.0 778.9 L365.5 776.6 L366.0 776.1 L366.5 774.0 L367.0 776.9 L367.5 774.1 L368.0 775.3 L368.5 777.7 L369.0 776.4 L369.5 776.7 L370.0 779.1 L370.5 779.1 L371.0 779.2 L371.5 779.2 L372.0 775.9 L372.5 777.4 L373.0 776.3 L373.5 768.0 L374.0 773.2 L374.5 773.1 L375.0 776.9 L375.5 774.1 L376.0 774.8 L376.5 776.8 L377.0 768.9 L377.5 773.1 L378.0 773.5 L378.5 770.2 L379.0 768.7 L379.5 768.3 L380.0 765.7 L380.5 762.8 L381.0 761.0 L381.5 760.2 L382.0 758.2 L382.5 761.1 L383.0 763.9 L383.5 766.2 L384.0 767.5 L384.5 768.5 L385.0 770.9 L385.5 773.1 L386.0 772.8 L386.5 770.7 L387.0 770.4 L387.5 768.9 L388.0 766.2 L388.5 764.9 L389.0 763.0 L389.5 760.7 L390.0 763.4 L390.5 764.9 L391.0 764.7 L391.5 766.4 L392.0 769.4 L392.5 768.9 L393.0 770.8 L393.5 772.7 L394.0 774.1 L394.5 775.7 L395.0 775.3 L395.5 776.1 L396.0 774.2 L396.5 774.9 L397.0 769.0 L397.5 771.8 L398.0 773.9 L398.5 776.0 L399.0 774.6 L399.5 772.7 L400.0 771.4 L400.5 770.7 L401.0 767.7 L401.5 765.5 L402.0 763.6 L402.5 765.6 L403.0 767.2 L403.5 770.9 L404.0 770.5 L404.5 773.6 L405.0 774.5 L405.5 776.7 L406.0 776.1 L406.5 771.3 L407.0 776.4 L407.5 770.6 L408.0 772.3 L408.5 774.2 L409.0 775.4 L409.5 774.4 L410.0 767.1 L410.5 775.4 L411.0 776.8 L411.5 777.3 L412.0 775.5 L412.5 775.7 L413.0 776.8 L413.5 776.1 L414.0 776.1 L414.5 775.8 L415.0 764.0 L415.5 774.3 L416.0 771.3 L416.5 772.4 L417.0 766.4 L417.5 773.6 L418.0 773.9 L418.5 775.0 L419.0 775.6 L419.5 775.7 L420.0 776.0 L420.5 777.4 L421.0 778.5 L421.5 778.9 L422.0 778.7 L422.5 776.6 L423.0 771.7 L423.5 775.7 L424.0 775.8 L424.5 775.6 L425.0 765.7 L425.5 775.6 L426.0 776.9 L426.5 774.1 L427.0 774.0 L427.5 772.7 L428.0 769.2 L428.5 764.9 L429.0 763.9 L429.5 767.4 L430.0 770.1 L430.5 772.7 L431.0 776.4 L431.5 777.0 L432.0 769.4 L432.5 778.4 L433.0 770.6 L433.5 777.7 L434.0 777.8 L434.5 778.0 L435.0 777.1 L435.5 777.2 L436.0 776.3 L436.5 773.8 L437.0 774.7 L437.5 774.7 L438.0 775.5 L438.5 774.9 L439.0 773.7 L439.5 774.5 L440.0 771.1 L440.5 774.0 L441.0 771.1 L441.5 773.5 L442.0 773.3 L442.5 773.9 L443.0 774.3 L443.5 774.1 L444.0 776.1 L444.5 776.3 L445.0 776.2 L445.5 774.2 L446.0 767.3 L446.5 777.4 L447.0 778.9 L447.5 776.3 L448.0 775.1 L448.5 774.9 L449.0 774.6 L449.5 774.6 L450.0 769.6 L450.5 778.4 L451.0 779.3 L451.5 779.7 L452.0 779.9 L452.5 779.5 L453.0 777.2 L453.5 777.6 L454.0 776.0 L454.5 776.2 L455.0 776.3 L455.5 776.4 L456.0 777.8 L456.5 779.2 L457.0 775.6 L457.5 777.6 L458.0 775.7 L458.5 776.7 L459.0 775.4 L459.5 775.8 L460.0 776.9 L460.5 774.6 L461.0 773.8 L461.5 770.3 L462.0 767.3 L462.5 767.3 L463.0 763.6 L463.5 760.7 L464.0 759.1 L464.5 762.3 L465.0 764.3 L465.5 765.4 L466.0 768.4 L466.5 767.5 L467.0 771.9 L467.5 773.7 L468.0 775.9 L468.5 775.2 L469.0 774.8 L469.5 773.3 L470.0 777.0 L470.5 774.2 L471.0 775.7 L471.5 777.4 L472.0 778.7 L472.5 777.0 L473.0 776.2 L473.5 767.7 L474.0 772.3 L474.5 778.0 L475.0 778.8 L475.5 775.4 L476.0 774.6 L476.5 772.5 L477.0 770.3 L477.5 766.1 L478.0 764.4 L478.5 760.8 L479.0 766.0 L479.5 766.9 L480.0 770.5 L480.5 773.9 L481.0 774.5 L481.5 775.7 L482.0 773.9 L482.5 768.7 L483.0 770.4 L483.5 767.4 L484.0 764.3 L484.5 763.1 L485.0 761.1 L485.5 757.8 L486.0 758.2 L486.5 759.0 L487.0 762.0 L487.5 766.0 L488.0 766.3 L488.5 769.2 L489.0 770.7 L489.5 773.0 L490.0 774.7 L490.5 766.2 L491.0 774.0 L491.5 774.9 L492.0 777.6 L492.5 778.4 L493.0 776.9 L493.5 780.5 L494.0 779.3 L494.5 779.4 L495.0 778.0 L495.5 766.0 L496.0 775.6 L496.5 767.8 L497.0 776.9 L497.5 776.8 L498.0 774.1 L498.5 776.4 L499.0 773.8 L499.5 773.2 L500.0 775.7 L500.5 773.8 L501.0 776.0 L501.5 768.0 L502.0 773.5 L502.5 775.2 L503.0 772.4 L503.5 770.1 L504.0 769.9 L504.5 766.7 L505.0 765.6 L505.5 767.8 L506.0 769.1 L506.5 772.2 L507.0 769.8 L507.5 768.2 L508.0 777.4 L508.5 774.2 L509.0 774.1 L509.5 773.4 L510.0 771.2 L510.5 770.1 L511.0 767.1 L511.5 765.9 L512.0 762.8 L512.5 762.6 L513.0 763.6 L513.5 765.2 L514.0 767.7 L514.5 770.0 L515.0 769.8 L515.5 771.9 L516.0 774.0 L516.5 771.8 L517.0 771.3 L517.5 769.7 L518.0 772.6 L518.5 772.3 L519.0 771.4 L519.5 770.9 L520.0 771.8 L520.5 773.0 L521.0 772.6 L521.5 769.7 L522.0 774.2 L522.5 775.4 L523.0 774.2 L523.5 776.2 L524.0 776.3 L524.5 775.5 L525.0 776.3 L525.5 774.9 L526.0 776.0 L526.5 777.2 L527.0 772.5 L527.5 777.8 L528.0 774.1 L528.5 770.0 L529.0 777.5 L529.5 779.2 L530.0 777.8 L530.5 775.8 L531.0 777.6 L531.5 775.9 L532.0 775.9 L532.5 776.1 L533.0 775.4 L533.5 776.5 L534.0 773.2 L534.5 776.5 L535.0 768.4 L535.5 775.9 L536.0 776.4 L536.5 774.2 L537.0 773.2 L537.5 774.3 L538.0 772.5 L538.5 771.6 L539.0 770.3 L539.5 772.1 L540.0 771.6 L540.5 773.4 L541.0 775.1 L541.5 776.1 L542.0 776.5 L542.5 766.5 L543.0 777.1 L543.5 777.7 L544.0 773.8 L544.5 770.3 L545.0 777.3 L545.5 776.8 L546.0 777.7 L546.5 774.3 L547.0 770.2 L547.5 780.5 L548.0 777.0 L548.5 776.8 L549.0 774.4 L549.5 775.2 L550.0 775.6 L550.5 775.1 L551.0 774.7 L551.5 774.6 L552.0 774.4 L552.5 775.4 L553.0 777.4 L553.5 779.7 L554.0 777.7 L554.5 775.0 L555.0 772.4 L555.5 769.2 L556.0 765.9 L556.5 763.1 L557.0 757.9 L557.5 758.7 L558.0 763.5 L558.5 768.2 L559.0 772.1 L559.5 773.8 L560.0 776.8 L560.5 776.1 L561.0 778.2 L561.5 778.0 L562.0 779.7 L562.5 770.9 L563.0 777.8 L563.5 778.1 L564.0 779.4 L564.5 774.5 L565.0 772.3 L565.5 776.1 L566.0 776.2 L566.5 777.3 L567.0 775.2 L567.5 776.4 L568.0 776.8 L568.5 773.2 L569.0 774.4 L569.5 775.7 L570.0 768.8 L570.5 775.8 L571.0 774.6 L571.5 774.0 L572.0 772.6 L572.5 771.6 L573.0 768.3 L573.5 768.9 L574.0 765.7 L574.5 764.5 L575.0 763.8 L575.5 763.1 L576.0 764.8 L576.5 766.8 L577.0 767.9 L577.5 770.2 L578.0 771.4 L578.5 772.6 L579.0 774.0 L579.5 775.2 L580.0 776.2 L580.5 775.3 L581.0 771.2 L581.5 771.7 L582.0 772.0 L582.5 769.6 L583.0 769.0 L583.5 766.9 L584.0 765.9 L584.5 767.3 L585.0 769.5 L585.5 771.0 L586.0 771.6 L586.5 771.5 L587.0 774.2 L587.5 774.7 L588.0 776.1 L588.5 774.1 L589.0 776.3 L589.5 775.4 L590.0 775.1 L590.5 774.3 L591.0 775.8 L591.5 776.2 L592.0 776.6 L592.5 773.7 L593.0 773.0 L593.5 772.1 L594.0 765.9 L594.5 767.1 L595.0 766.5 L595.5 762.1 L596.0 763.3 L596.5 766.2 L597.0 766.9 L597.5 770.4 L598.0 770.9 L598.5 774.3 L599.0 776.0 L599.5 773.2 L600.0 772.9 L600.5 775.6 L601.0 773.6 L601.5 773.4 L602.0 773.8 L602.5 773.5 L603.0 773.7 L603.5 774.8 L604.0 776.0 L604.5 776.7 L605.0 778.6 L605.5 777.7 L606.0 771.6 L606.5 774.3 L607.0 774.6 L607.5 771.5 L608.0 770.9 L608.5 768.7 L609.0 768.7 L609.5 766.4 L610.0 764.4 L610.5 763.0 L611.0 760.6 L611.5 757.7 L612.0 755.3 L612.5 758.6 L613.0 761.6 L613.5 761.6 L614.0 765.8 L614.5 766.6 L615.0 768.2 L615.5 770.2 L616.0 772.8 L616.5 773.9 L617.0 775.4 L617.5 776.0 L618.0 768.3 L618.5 776.8 L619.0 773.2 L619.5 768.7 L620.0 764.4 L620.5 761.3 L621.0 762.9 L621.5 768.2 L622.0 772.2 L622.5 774.7 L623.0 776.4 L623.5 776.5 L624.0 775.5 L624.5 774.4 L625.0 773.3 L625.5 776.9 L626.0 773.6 L626.5 775.9 L627.0 776.4 L627.5 776.0 L628.0 774.3 L628.5 774.5 L629.0 772.9 L629.5 771.3 L630.0 767.9 L630.5 769.1 L631.0 766.5 L631.5 764.8 L632.0 764.1 L632.5 761.1 L633.0 758.7 L633.5 760.6 L634.0 761.8 L634.5 764.3 L635.0 765.3 L635.5 767.6 L636.0 768.9 L636.5 769.4 L637.0 770.4 L637.5 772.2 L638.0 774.4 L638.5 773.4 L639.0 768.9 L639.5 777.5 L640.0 773.7 L640.5 776.4 L641.0 777.4 L641.5 775.4 L642.0 772.4 L642.5 777.2 L643.0 769.7 L643.5 776.9 L644.0 779.5 L644.5 764.2 L645.0 774.6 L645.5 776.6 L646.0 776.0 L646.5 769.2 L647.0 775.0 L647.5 776.9 L648.0 778.5 L648.5 776.3 L649.0 773.8 L649.5 776.4 L650.0 767.0 L650.5 778.0 L651.0 777.3 L651.5 776.1 L652.0 776.9 L652.5 776.5 L653.0 776.5 L653.5 776.1 L654.0 775.4 L654.5 773.9 L655.0 772.5 L655.5 773.3 L656.0 770.6 L656.5 769.5 L657.0 767.7 L657.5 769.3 L658.0 770.8 L658.5 773.1 L659.0 774.2 L659.5 774.6 L660.0 775.4 L660.5 772.6 L661.0 771.1 L661.5 767.3 L662.0 774.3 L662.5 770.9 L663.0 773.9 L663.5 777.4 L664.0 778.8 L664.5 779.3 L665.0 777.8 L665.5 771.4 L666.0 776.5 L666.5 775.1 L667.0 778.5 L667.5 777.2 L668.0 777.9 L668.5 773.5 L669.0 774.4 L669.5 768.6 L670.0 773.0 L670.5 772.6 L671.0 771.1 L671.5 768.4 L672.0 766.4 L672.5 767.5 L673.0 764.3 L673.5 762.1 L674.0 761.9 L674.5 759.4 L675.0 756.2 L675.5 758.1 L676.0 759.9 L676.5 763.2 L677.0 764.9 L677.5 766.8 L678.0 766.7 L678 788 Z" fill="#5e6a6d"/>
<path d="M682 788 L682.0 779.7 L682.5 780.1 L683.0 771.4 L683.5 778.6 L684.0 779.9 L684.5 779.8 L685.0 771.2 L685.5 776.8 L686.0 777.0 L686.5 775.9 L687.0 776.1 L687.5 776.5 L688.0 779.0 L688.5 777.3 L689.0 775.5 L689.5 775.9 L690.0 774.6 L690.5 768.9 L691.0 768.3 L691.5 768.2 L692.0 772.0 L692.5 774.1 L693.0 774.0 L693.5 775.7 L694.0 777.0 L694.5 778.3 L695.0 773.3 L695.5 775.8 L696.0 776.4 L696.5 776.3 L697.0 777.1 L697.5 777.6 L698.0 777.2 L698.5 777.6 L699.0 777.7 L699.5 777.8 L700.0 776.9 L700.5 777.1 L701.0 773.5 L701.5 778.8 L702.0 776.5 L702.5 779.5 L703.0 779.3 L703.5 777.1 L704.0 775.8 L704.5 776.2 L705.0 777.0 L705.5 777.6 L706.0 778.0 L706.5 777.8 L707.0 771.8 L707.5 777.1 L708.0 778.1 L708.5 777.2 L709.0 776.5 L709.5 776.7 L710.0 774.1 L710.5 773.5 L711.0 773.5 L711.5 772.6 L712.0 772.7 L712.5 771.7 L713.0 769.6 L713.5 769.1 L714.0 767.9 L714.5 766.6 L715.0 768.8 L715.5 769.1 L716.0 770.3 L716.5 768.7 L717.0 771.3 L717.5 774.3 L718.0 774.8 L718.5 775.6 L719.0 774.3 L719.5 772.2 L720.0 768.8 L720.5 766.6 L721.0 763.7 L721.5 759.8 L722.0 756.1 L722.5 758.4 L723.0 763.2 L723.5 765.4 L724.0 769.5 L724.5 771.3 L725.0 774.8 L725.5 775.9 L726.0 774.5 L726.5 773.4 L727.0 773.2 L727.5 771.5 L728.0 770.1 L728.5 768.1 L729.0 767.2 L729.5 765.6 L730.0 766.0 L730.5 763.0 L731.0 762.6 L731.5 761.0 L732.0 757.8 L732.5 759.1 L733.0 761.7 L733.5 762.4 L734.0 765.5 L734.5 765.5 L735.0 767.8 L735.5 769.1 L736.0 769.3 L736.5 772.1 L737.0 772.0 L737.5 772.5 L738.0 773.4 L738.5 775.4 L739.0 776.7 L739.5 776.6 L740.0 778.7 L740.5 777.4 L741.0 779.6 L741.5 773.4 L742.0 777.2 L742.5 778.5 L743.0 779.0 L743.5 772.5 L744.0 776.2 L744.5 778.8 L745.0 778.5 L745.5 778.9 L746.0 777.8 L746.5 779.2 L747.0 778.7 L747.5 778.0 L748.0 770.7 L748.5 773.9 L749.0 775.2 L749.5 774.5 L750.0 769.3 L750.5 773.5 L751.0 772.3 L751.5 769.7 L752.0 768.8 L752.5 768.4 L753.0 765.4 L753.5 765.2 L754.0 762.9 L754.5 760.4 L755.0 759.1 L755.5 757.3 L756.0 760.6 L756.5 762.4 L757.0 762.4 L757.5 764.7 L758.0 767.3 L758.5 767.5 L759.0 769.7 L759.5 771.7 L760.0 772.3 L760.5 772.5 L761.0 775.4 L761.5 776.1 L762.0 772.3 L762.5 776.0 L763.0 776.7 L763.5 775.7 L764.0 776.4 L764.5 766.8 L765.0 775.9 L765.5 773.2 L766.0 777.0 L766.5 768.4 L767.0 779.7 L767.5 771.4 L768.0 776.8 L768.5 776.2 L769.0 774.2 L769.5 771.9 L770.0 774.8 L770.5 774.0 L771.0 775.0 L771.5 775.5 L772.0 776.5 L772.5 778.2 L773.0 771.1 L773.5 776.8 L774.0 773.2 L774.5 764.6 L775.0 769.2 L775.5 765.4 L776.0 775.5 L776.5 776.7 L777.0 775.3 L777.5 771.2 L778.0 770.3 L778.5 766.8 L779.0 763.7 L779.5 763.5 L780.0 768.6 L780.5 770.0 L781.0 773.1 L781.5 775.3 L782.0 777.0 L782.5 777.5 L783.0 779.5 L783.5 776.6 L784.0 777.5 L784.5 777.3 L785.0 777.3 L785.5 777.3 L786.0 777.8 L786.5 777.4 L787.0 778.4 L787.5 773.3 L788.0 777.8 L788.5 778.9 L789.0 778.5 L789.5 775.7 L790.0 779.2 L790.5 777.5 L791.0 768.0 L791.5 774.8 L792.0 770.8 L792.5 777.0 L793.0 776.9 L793.5 777.6 L794.0 776.2 L794.5 776.8 L795.0 779.3 L795.5 776.1 L796.0 776.8 L796.5 765.9 L797.0 771.4 L797.5 774.9 L798.0 772.9 L798.5 771.5 L799.0 772.1 L799.5 767.5 L800.0 768.7 L800.5 765.7 L801.0 766.4 L801.5 768.8 L802.0 770.8 L802.5 773.1 L803.0 774.2 L803.5 775.3 L804.0 771.5 L804.5 778.2 L805.0 767.5 L805.5 777.5 L806.0 775.0 L806.5 775.0 L807.0 767.8 L807.5 774.3 L808.0 772.0 L808.5 774.1 L809.0 777.0 L809.5 774.4 L810.0 778.0 L810.5 778.2 L811.0 767.3 L811.5 775.9 L812.0 774.9 L812.5 776.8 L813.0 767.9 L813.5 774.4 L814.0 775.3 L814.5 774.9 L815.0 774.6 L815.5 773.6 L816.0 773.6 L816.5 774.6 L817.0 776.8 L817.5 774.8 L818.0 777.6 L818.5 777.1 L819.0 779.3 L819 788 Z" fill="#5e6a6d"/>
<rect x="32" y="788" width="646" height="1.2" fill="#2b2d31"/>
<rect x="682" y="788" width="342" height="1.2" fill="#2b2d31"/>
<g fill="#c8c8c8"><path d="M47.5 750.2 L57.8 748 L57.8 750.6 L47.5 752.8 Z"/><rect x="46.7" y="750.5" width="1.4" height="10.5"/><rect x="57.0" y="748.3" width="1.4" height="10.3"/><ellipse cx="45.1" cy="761.2" rx="2.5" ry="2" transform="rotate(-20 45.1 761.2)"/><ellipse cx="55.5" cy="758.8" rx="2.5" ry="2" transform="rotate(-20 55.5 758.8)"/></g>
<g fill="#c8c8c8"><path d="M697.5 750.2 L707.8 748 L707.8 750.6 L697.5 752.8 Z"/><rect x="696.7" y="750.5" width="1.4" height="10.5"/><rect x="707.0" y="748.3" width="1.4" height="10.3"/><ellipse cx="695.1" cy="761.2" rx="2.5" ry="2" transform="rotate(-20 695.1 761.2)"/><ellipse cx="705.5" cy="758.8" rx="2.5" ry="2" transform="rotate(-20 705.5 758.8)"/></g>
<text x="64" y="760" font-family="Liberation Sans" font-size="13" font-weight="700" fill="#d6d6d6" letter-spacing="-0.37">Screen Recording (10.03.2025 12-10-56)</text>
<text x="714" y="760" font-family="Liberation Sans" font-size="13" font-weight="700" fill="#d6d6d6" letter-spacing="-0.37">Screen Recording (10.03.2025 12-10-56)</text>
<rect x="45" y="789.7" width="250" height="22.6" fill="#6a4cae"/>
<rect x="300.4" y="789.7" width="329.5" height="22.6" fill="#6a4cae"/>
<text x="55.5" y="806" font-family="Liberation Sans" font-size="12" fill="#e8e2f3">I need to get detailed reports on test resu...</text>
<text x="310" y="806" font-family="Liberation Sans" font-size="12" fill="#e8e2f3">scores. It would be helpful to see which ...</text>
<rect x="1015.5" y="673" width="5.3" height="150" rx="2.6" fill="#54575d"/>
<rect x="172.7" y="630" width="1.4" height="247" fill="#c2bebb"/>
<path d="M167 624 Q167 621.8 169.2 621.8 L177.8 621.8 Q180 621.8 180 624 L180 626.5 Q180 630 176 632.5 L173.5 634.5 L171 632.5 Q167 630 167 626.5 Z" fill="#cac6c3"/>
</svg>
<!-- MENU -->
<div class="abs" style="left:520px;top:759px;width:96px;height:96px;background:#fff;border:1px solid #a0a0a0;box-shadow:1px 1px 2px rgba(0,0,0,0.25)"></div>
<svg class="abs" style="left:0;top:0" width="1024" height="877">
<rect x="544" y="761" width="1" height="69.5" fill="#e0e0e0"/>
<rect x="522" y="831" width="92.3" height="22" fill="#c7e5f8"/>
<line x1="552" y1="828.5" x2="614" y2="828.5" stroke="#c8c8c8" stroke-width="1" stroke-dasharray="2 2"/>
<g fill="none" stroke="#7a7a7a" stroke-width="0.9"><path d="M529 764 L535.5 776"/><path d="M537 764 L531 776"/></g><g fill="none" stroke="#2a6fc9" stroke-width="1"><circle cx="530.5" cy="778" r="1.7"/><circle cx="536" cy="778" r="1.7"/></g>
<g fill="none" stroke="#404040" stroke-width="0.9"><path d="M526.5 798 L526.5 786 L533 786"/><path d="M528.5 789 L536 789 L541 793.5 L541 802 L528.5 802 Z"/></g><g stroke="#2a6fc9" stroke-width="0.9"><line x1="533" y1="797" x2="537" y2="797"/><line x1="533" y1="799" x2="537" y2="799"/></g>
<path d="M526 810.5 L526 821.5 L533 821.5" fill="none" stroke="#e8891c" stroke-width="1"/><path d="M526 810.5 L529 810.5 M536.5 810.5 L537.5 810.5 L537.5 813" fill="none" stroke="#e8891c" stroke-width="1"/><path d="M529.5 810.5 L529.5 808.5 L531.5 808.5 L532.5 807 L533.5 808.5 L535.5 808.5 L535.5 810.5" fill="none" stroke="#606060" stroke-width="0.8"/><rect x="533.5" y="814" width="7" height="8.5" fill="#fff" stroke="#404040" stroke-width="0.9"/>
<g stroke="#e05050" stroke-width="1.1"><line x1="525.8" y1="835" x2="540.4" y2="849"/><line x1="540.4" y1="835" x2="525.8" y2="849"/></g>
<g font-family="Liberation Sans" font-size="11" fill="#111">
<text x="549.3" y="775.8">Cut</text><text x="549.3" y="797.5">Copy</text><text x="549.3" y="819.5">Paste</text><text x="549.3" y="845.2">Remove</text>
</g>
<path d="M603.5 834 L603.5 850 L607 846.5 L609.5 852.5 L612 851.5 L609.6 845.6 L614.5 845.6 Z" fill="#fff" stroke="#111" stroke-width="1" stroke-linejoin="round"/>
</svg>
<div class="abs" style="left:0;top:0;width:1024px;height:877px;border-radius:9px;box-shadow:0 0 0 1px #cfcfcf inset"></div>
<!-- /MENU -->
</div>
</body></html>
